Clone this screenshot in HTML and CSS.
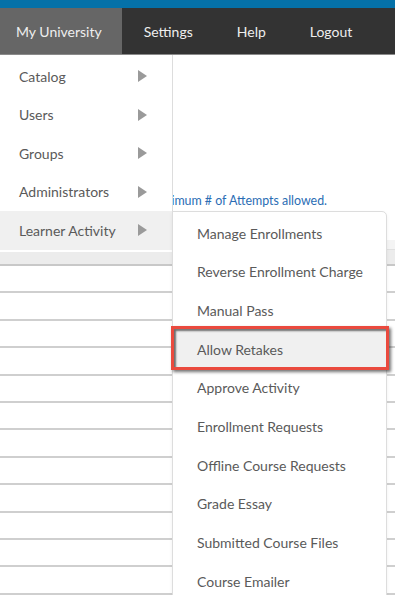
FILE: index.html
```html
<!DOCTYPE html>
<html lang="en">
<head>
    <meta charset="UTF-8">
    <meta name="viewport" content="width=device-width, initial-scale=1.0">
    <title>Allow Retakes</title>
    <link rel="stylesheet" href="styles.css">
</head>
<body>

    <div class="top-stripe"></div>

    <nav class="main-nav">
        <a class="nav-item active">My University</a>
        <a class="nav-item">Settings</a>
        <a class="nav-item">Help</a>
        <a class="nav-item">Logout</a>
    </nav>

    <div class="page">
        <div class="intro">
            <p>Learners listed below have reached the Maximum # of Attempts allowed.</p>
        </div>

        <table class="grid">
            <thead>
                <tr class="filter-row"><td></td></tr>
                <tr class="head-row"><th></th></tr>
            </thead>
            <tbody>
                <tr><td></td></tr>
                <tr><td></td></tr>
                <tr><td></td></tr>
                <tr><td></td></tr>
                <tr><td></td></tr>
                <tr><td></td></tr>
                <tr><td></td></tr>
                <tr><td></td></tr>
                <tr><td></td></tr>
                <tr><td></td></tr>
                <tr><td></td></tr>
                <tr><td></td></tr>
            </tbody>
        </table>

        <ul class="dropdown">
            <li><span>Catalog</span><i class="arrow"></i></li>
            <li><span>Users</span><i class="arrow"></i></li>
            <li><span>Groups</span><i class="arrow"></i></li>
            <li><span>Administrators</span><i class="arrow"></i></li>
            <li class="open"><span>Learner Activity</span><i class="arrow"></i></li>
        </ul>

        <ul class="submenu">
            <li>Manage Enrollments</li>
            <li>Reverse Enrollment Charge</li>
            <li>Manual Pass</li>
            <li class="marked">Allow Retakes</li>
            <li>Approve Activity</li>
            <li>Enrollment Requests</li>
            <li>Offline Course Requests</li>
            <li>Grade Essay</li>
            <li>Submitted Course Files</li>
            <li>Course Emailer</li>
        </ul>
    </div>

</body>
</html>
```

FILE: styles.css
```css
body {
    margin: 0;
    font-family: Lato, "Open Sans", sans-serif;
    background-color: #fff;
    overflow: hidden;
}
.top-stripe {
    height: 8px;
    background-color: #0571a8;
}
.main-nav {
    display: flex;
    height: 46px;
    background-color: #333;
    border-bottom: 1px solid #8a8a8a;
}
.nav-item {
    display: flex;
    align-items: center;
    padding: 0 22px;
    color: #eee;
    font-size: 14px;
}
.nav-item.active {
    padding: 0 20px 0 16px;
    background-color: #666;
}
.page {
    position: relative;
}

/* only the tail of the sentence shows beside the open menu */
.intro {
    display: flex;
    justify-content: flex-end;
    width: 155px;
    height: 47px;
    margin-left: 172px;
    padding-top: 138px;
    overflow: hidden;
}
.intro p {
    margin: 0;
    flex-shrink: 0;
    line-height: 15px;
    font-size: 12.4px;
    color: #2a6db4;
    white-space: nowrap;
}
.grid {
    width: 100%;
    border-collapse: collapse;
}
.grid td, .grid th {
    padding: 0;
}
.filter-row td {
    height: 9px;
    background-color: #f4f4f4;
    border-bottom: 1px solid #e0e0e0;
}
.head-row th {
    height: 14px;
    background-color: #ececec;
    border-bottom: 2px solid #c8c8c8;
}
.grid tbody td {
    height: 25.4px;
    border-bottom: 2px solid #cfcfcf;
}
.dropdown, .submenu {
    list-style: none;
    margin: 0;
    position: absolute;
    background-color: #fff;
    color: #5a5a5a;
    font-size: 14px;
}
.dropdown {
    top: 0;
    left: 0;
    width: 172px;
    padding: 2px 0 2px;
    border-right: 1px solid #ddd;
}
.dropdown li {
    display: flex;
    align-items: center;
    justify-content: space-between;
    height: 38.5px;
    padding: 0 25px 0 19px;
}
.dropdown li.open {
    background-color: #f0f0f0;
}
.arrow {
    width: 0;
    height: 0;
    border-top: 6.5px solid transparent;
    border-bottom: 6.5px solid transparent;
    border-left: 9px solid #9a9a9a;
}
.submenu {
    top: 156px;
    left: 172px;
    width: 213px;
    padding: 2px 0;
    border: 1px solid #ddd;
    border-radius: 0 5px 0 0;
    box-shadow: 0 2px 4px rgba(0, 0, 0, 0.06);
}
.submenu li {
    position: relative;
    display: flex;
    align-items: center;
    height: 38.65px;
    padding-left: 24px;
}
.submenu li.marked {
    background-color: #f0f0f0;
}
.submenu li.marked::after {
    content: "";
    position: absolute;
    top: -4px;
    left: -2px;
    right: -3px;
    bottom: -1px;
    border: 3px solid #ea4a3e;
    box-shadow: 2px 2px 3px rgba(0, 0, 0, 0.55), inset 2px 2px 2px rgba(0, 0, 0, 0.55);
}
```
